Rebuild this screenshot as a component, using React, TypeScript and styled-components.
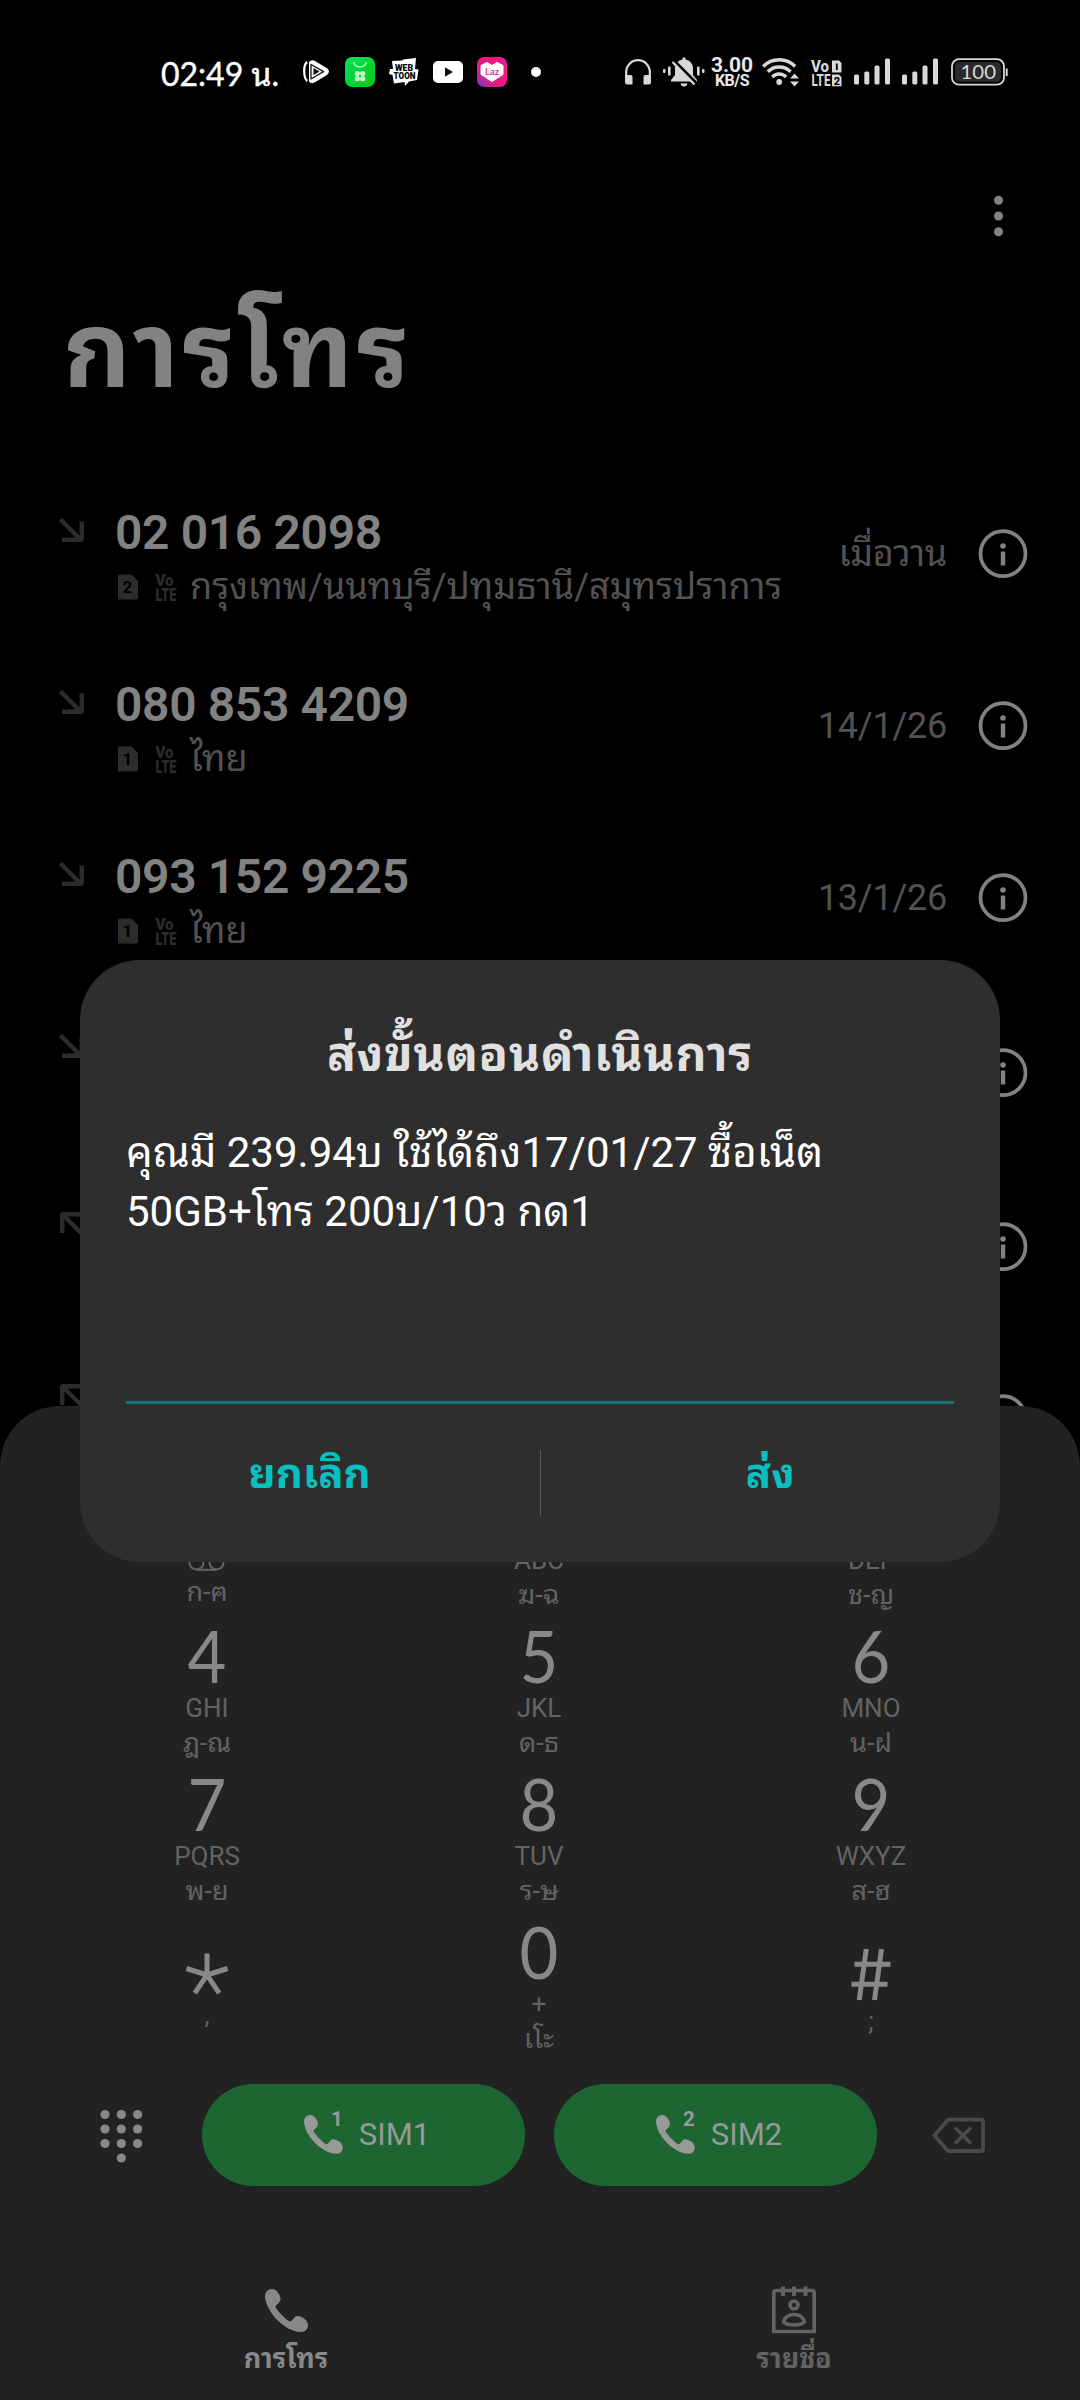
import React from "react";
import styled, { createGlobalStyle } from "styled-components";

const sans = `Roboto, "Noto Sans Thai Looped", "Noto Sans Thai", "Noto Sans", sans-serif`;

const GlobalStyle = createGlobalStyle`
  html, body { margin: 0; padding: 0; background: #000; }
  *, *::before, *::after { box-sizing: border-box; }
  svg { display: block; flex: none; overflow: visible; }
`;

const Screen = styled.div`
  position: relative;
  width: 1080px;
  height: 2400px;
  overflow: hidden;
  background: #000;
  color: #828282;
  font-family: ${sans};
  display: flex;
  flex-direction: column;
`;

/* ---------- status bar ---------- */

const StatusBar = styled.header`
  height: 144px;
  flex: none;
  display: flex;
  justify-content: space-between;
  align-items: center;
  padding: 0 72px 0 161px;
`;

const StatusGroup = styled.div`
  display: flex;
  align-items: center;
`;

const Slot = styled.div<{ $ml?: number }>`
  margin-left: ${(p) => p.$ml ?? 0}px;
`;

const Clock = styled.span`
  width: 142px;
  color: #fff;
  font: 400 32px/40px Lato, "Noto Sans Thai Looped", "Noto Sans Thai", sans-serif;
  -webkit-text-stroke: 0.4px #fff;
  white-space: nowrap;
  margin-top: 3px;
`;

const Speed = styled.div`
  width: 44px;
  margin-left: 5px;
  color: #e8e8e8;
  display: flex;
  flex-direction: column;
  align-items: center;
  font-weight: 700;
`;

const SpeedValue = styled.span`
  font-size: 21px;
  line-height: 17px;
`;

const SpeedUnit = styled.span`
  font-size: 16px;
  line-height: 14px;
  letter-spacing: -0.5px;
`;

/* ---------- page ---------- */

const Toolbar = styled.div`
  flex: none;
  height: 144px;
  display: flex;
  align-items: center;
  justify-content: flex-end;
  padding: 0 76px 0 0;
`;

const Title = styled.h1`
  margin: 0;
  flex: none;
  height: 180px;
  padding: 0 0 0 63px;
  font-size: 105px;
  line-height: 128px;
  letter-spacing: 3.6px;
  font-weight: 700;
  color: #828282;
`;

const List = styled.ul`
  list-style: none;
  margin: 0;
  padding: 0;
`;

const Row = styled.li<{ $tall?: boolean }>`
  height: ${(p) => (p.$tall ? 177 : 172)}px;
  display: flex;
  align-items: center;
  padding: 0 52px 0 58px;
`;

const Direction = styled.div`
  width: 57px;
  align-self: flex-start;
  padding-top: 49px;
`;

const Entry = styled.div`
  flex: 1;
  align-self: flex-start;
  padding-top: 37px;
`;

const Phone = styled.div`
  font-size: 48px;
  line-height: 56px;
  font-weight: 600;
  letter-spacing: -0.35px;
  color: #828282;
  white-space: nowrap;
`;

const Detail = styled.div`
  display: flex;
  align-items: center;
  margin-top: 4px;
  padding-left: 2px;
  height: 44px;
`;

const Place = styled.span`
  margin-left: 13px;
  font-size: 36px;
  line-height: 44px;
  color: #525252;
  white-space: nowrap;
`;

const When = styled.span`
  font-size: 36px;
  line-height: 44px;
  letter-spacing: -0.25px;
  color: #525252;
  margin-right: 31px;
  white-space: nowrap;
`;

/* ---------- dial pad ---------- */

const Sheet = styled.section`
  position: absolute;
  left: 0;
  right: 0;
  bottom: 0;
  height: 994px;
  border-radius: 60px 60px 0 0;
  background: #222;
  display: flex;
  flex-direction: column;
`;

const Keys = styled.div`
  margin-top: 64px;
  padding: 0 41px;
  display: grid;
  grid-template-columns: repeat(3, 332px);
  grid-auto-rows: 148px;
`;

const Key = styled.div`
  display: flex;
  flex-direction: column;
  align-items: center;
`;

const Digit = styled.span`
  font: 400 72px/74px Lato, ${sans};
  color: #888;
  height: 72px;
  transform: scaleX(0.93);
`;

const Symbol = styled.span`
  height: 72px;
`;

const Letters = styled.span<{ $drop?: number; $h?: number }>`
  font-size: 26px;
  line-height: 36px;
  height: ${(p) => p.$h ?? 36}px;
  margin-top: ${(p) => p.$drop ?? 0}px;
  color: #636363;
`;

const ThaiLetters = styled.span`
  font-size: 27px;
  line-height: 34px;
  color: #636363;
`;

const CallBar = styled.div`
  margin-top: 22px;
  height: 102px;
  display: flex;
  align-items: center;
  padding: 0 93px 0 100px;
`;

const CallButton = styled.button`
  width: 323px;
  height: 102px;
  border: 0;
  padding: 0 0 0 7px;
  border-radius: 51px;
  background: #1e6631;
  color: #999;
  font: 400 31px/36px ${sans};
  display: flex;
  align-items: center;
  justify-content: center;
  gap: 15px;
`;

const CallPair = styled.div`
  display: flex;
  gap: 29px;
  margin: 0 55px 0 59px;
`;

const Tabs = styled.nav`
  margin-top: 99px;
  display: grid;
  grid-template-columns: 508px 508px;
  padding-left: 32px;
`;

const Tab = styled.div<{ $active?: boolean }>`
  display: flex;
  flex-direction: column;
  align-items: center;
  color: ${(p) => (p.$active ? "#888" : "#636363")};
  font-size: 27px;
  line-height: 48px;
  font-weight: 700;
`;

const TabIcon = styled.div`
  height: 50px;
  display: flex;
  align-items: center;
`;

/* ---------- dialog ---------- */

const Dialog = styled.section`
  position: absolute;
  left: 80px;
  top: 960px;
  width: 920px;
  height: 602px;
  border-radius: 60px;
  background: #2e2e2e;
  padding: 0 46px;
  display: flex;
  flex-direction: column;
`;

const DialogTitle = styled.h2`
  margin: 65px 0 0;
  text-align: center;
  font-size: 48px;
  line-height: 60px;
  letter-spacing: 0.7px;
  font-weight: 700;
  color: #e0e0e0;
`;

const Message = styled.p`
  margin: 38px 0 0;
  height: 215px;
  font-size: 42px;
  line-height: 59px;
  color: #fff;
  white-space: pre;
`;

const Field = styled.div`
  height: 66px;
  border-bottom: 3px solid #0f7676;
`;

const Actions = styled.div`
  margin: 46px -46px 0;
  display: flex;
  align-items: flex-start;
  height: 66px;
`;

const Action = styled.button`
  flex: 1;
  border: 0;
  background: none;
  padding: 0;
  color: #0abfbf;
  font: 700 42px/47px ${sans};
`;

const Divider = styled.i`
  width: 1px;
  height: 66px;
  background: #5a5a5a;
`;

/* ---------- icons ---------- */

const PlayTriangle = () => (
  <svg width="27" height="26" viewBox="0 0 27 26">
    <path d="M6 3Q8 .3 11.500 1.700L24 9.200Q28 12.500 24 16L11.500 23.500Q8 25 6 22.500Z" fill="#fff" />
    <path d="M4.300 3Q1 5 1.200 12.500T4.300 22" fill="none" stroke="#fff" strokeWidth="2.200" />
    <path d="M8 5.500L20.500 12.600L8 20Z" fill="none" stroke="#111" strokeWidth="1.300" strokeLinejoin="round" />
    <path d="M10.500 9L16.500 12.600L10.500 16.200Z" fill="#111" />
  </svg>
);

const GreenApp = () => (
  <svg width="30" height="30" viewBox="0 0 30 30">
    <defs>
      <linearGradient id="green" x1="0" y1="0" x2="1" y2="1">
        <stop offset="0" stopColor="#07e060" />
        <stop offset="1" stopColor="#06c80e" />
      </linearGradient>
    </defs>
    <rect width="30" height="30" rx="7" fill="url(#green)" />
    <path d="M8.500 5Q10 10 15 10T21.500 5" fill="none" stroke="#c8ffd0" strokeWidth="1.200" />
    <g fill="#c3f7c8">
      <circle cx="12.300" cy="16.500" r="2.600" />
      <circle cx="17.700" cy="16.500" r="2.600" />
      <circle cx="12.300" cy="21.700" r="2.600" />
      <circle cx="17.700" cy="21.700" r="2.600" />
    </g>
  </svg>
);

const Webtoon = () => (
  <svg width="30" height="30" viewBox="0 0 30 30">
    <path d="M3 4L13 3.500L14 2.500L27 1L26 12L29.500 12.500L28 23L20 24.500L16 29L15.500 25L5 26.500L3.500 18L0 17L1 12L4 12Z" fill="#fff" />
    <g fill="#000" fontFamily="Roboto, sans-serif" fontWeight="900">
      <text x="6" y="14" fontSize="9" textLength="18" lengthAdjust="spacingAndGlyphs">WEB</text>
      <text x="4.500" y="21.500" fontSize="9" textLength="22" lengthAdjust="spacingAndGlyphs">TOON</text>
    </g>
  </svg>
);

const VideoApp = () => (
  <svg width="30" height="22" viewBox="0 0 30 22">
    <rect width="30" height="22" rx="5" fill="#fff" />
    <path d="M12 6.300L20 11L12 15.700Z" fill="#111" />
  </svg>
);

const HeartApp = () => (
  <svg width="30" height="30" viewBox="0 0 30 30">
    <defs>
      <linearGradient id="pink" x1="1" y1="0" x2="0" y2="1">
        <stop offset="0" stopColor="#c02bb8" />
        <stop offset=".25" stopColor="#f5147e" />
        <stop offset=".7" stopColor="#e01c8c" />
        <stop offset="1" stopColor="#5a3fd8" />
      </linearGradient>
    </defs>
    <rect width="30" height="30" rx="7" fill="url(#pink)" />
    <path d="M4 8.500L10 5.500L15 8.500L20 5.500L26 8.500V17.500L15 24.500L4 17.500Z" fill="#fff" stroke="#fff" strokeLinejoin="round" strokeWidth="1" />
    <text x="8" y="18" fontFamily="Lato, sans-serif" fontWeight="700" fontSize="9.500" fill="#e8308c" textLength="14" lengthAdjust="spacingAndGlyphs">Laz</text>
  </svg>
);

const Dot = () => (
  <svg width="10" height="10"><circle cx="5" cy="5" r="5" fill="#fff" /></svg>
);

const Headphones = () => (
  <svg width="28" height="28" viewBox="0 0 28 28">
    <path d="M2.200 20V14A11.800 11.800 0 0 1 25.800 14V20" fill="none" stroke="#d8d8d8" strokeWidth="2.200" />
    <path d="M1 17H6.500Q8.500 17 8.500 19V26.500H3.500Q1 26.500 1 24ZM27 17H21.500Q19.500 17 19.500 19V26.500H24.500Q27 26.500 27 24Z" fill="#d8d8d8" />
  </svg>
);

const BellOff = () => (
  <svg width="42" height="30" viewBox="0 0 42 30">
    <g fill="#d8d8d8">
      <rect x="0" y="12" width="2.500" height="4" rx="1" />
      <rect x="5" y="9.500" width="2.600" height="9" rx="1" />
      <rect x="34" y="9.500" width="2.600" height="9" rx="1" />
      <rect x="39" y="12" width="2.500" height="4" rx="1" />
      <path d="M19.500.5H22.500V2.500Q29.500 4 30 11V18L34 23V24.500H8V23L12 18V11Q12.500 4 19.500 2.500Z" />
      <path d="M17.500 26.500H24.500Q24 29.500 21 29.500T17.500 26.500Z" />
    </g>
    <path d="M11.500 4.500L32.500 25.500" stroke="#000" strokeWidth="3.400" />
    <path d="M9.500 5L31.500 27.500" stroke="#d8d8d8" strokeWidth="2.400" />
  </svg>
);

const Wifi = () => (
  <svg width="38" height="30" viewBox="0 0 38 30">
    <g fill="none" stroke="#d8d8d8" strokeWidth="3.400">
      <path d="M1.200 9.500A22.500 22.500 0 0 1 33.200 9.500" />
      <path d="M5.800 14.800A16 16 0 0 1 28.600 14.800" />
      <path d="M10.300 20A9.500 9.500 0 0 1 24.100 20" />
    </g>
    <circle cx="17.200" cy="25" r="2.900" fill="#d8d8d8" />
    <path d="M28 21.500L32.500 16.500L37 21.500ZM28 24.500L32.500 29.500L37 24.500Z" fill="#d8d8d8" />
  </svg>
);

const VoLteDual = () => (
  <svg width="31" height="27" viewBox="0 0 31 27">
    <g fontFamily="Roboto, sans-serif" fontWeight="800" fill="#d8d8d8">
      <text x="0" y="13" fontSize="16" textLength="18" lengthAdjust="spacingAndGlyphs">Vo</text>
      <text x="0.500" y="27" fontSize="16.500" textLength="19" lengthAdjust="spacingAndGlyphs">LTE</text>
      <path d="M21 1.500H28L30.500 4V13.500H21ZM21 15.500H28L30.500 18V27.200H21Z" />
      <path d="M25.800 4.500V11" stroke="#000" strokeWidth="1.800" />
      <text x="22.700" y="25.500" fontSize="11" fill="#000">2</text>
    </g>
  </svg>
);

const Signal = () => (
  <svg width="36" height="28" viewBox="0 0 36 28" fill="#d8d8d8">
    <rect x="0" y="16.500" width="5" height="10" rx="1.500" />
    <rect x="10.300" y="13.500" width="5" height="13" rx="1.500" />
    <rect x="20.500" y="7.500" width="5" height="19" rx="1.500" />
    <rect x="31" y=".5" width="5" height="26" rx="1.500" />
  </svg>
);

const Battery = () => (
  <svg width="57" height="28" viewBox="0 0 57 28">
    <rect x="1" y="1.200" width="52" height="25.500" rx="7" fill="none" stroke="#d8d8d8" strokeWidth="1.800" />
    <rect x="4" y="4.200" width="46" height="19.500" rx="4.500" fill="#2b2b2b" />
    <path d="M55.700 10.500V18" stroke="#d8d8d8" strokeWidth="2" />
    <text x="9.500" y="20.600" fontFamily="Lato, sans-serif" fontSize="19" fill="#d8d8d8" textLength="35.500" lengthAdjust="spacingAndGlyphs">100</text>
  </svg>
);

const More = () => (
  <svg width="11" height="42" viewBox="0 0 11 42" fill="#828282">
    <circle cx="5.500" cy="5.300" r="4.500" />
    <circle cx="5.500" cy="21" r="4.500" />
    <circle cx="5.500" cy="36.700" r="4.500" />
  </svg>
);

const ArrowIcon = ({ out }: { out?: boolean }) => (
  <svg width="28" height="28" viewBox="0 0 28 28" fill="none" stroke="#2c2c2c" strokeWidth="4.500">
    {out ? (
      <path d="M25 25L5.500 5.500M4.200 23V5.500Q4.200 4.200 5.500 4.200H24" />
    ) : (
      <path d="M2.500 2.500L22 22M4 22.800H22.500Q23.800 22.800 23.800 21.500V4.500" />
    )}
  </svg>
);

const SimIcon = ({ n }: { n: number }) => (
  <svg width="22" height="26" viewBox="0 0 22 26">
    <path d="M2 0.500H14.500L21 7V23.500Q21 25.500 19 25.500H1V1.500Q1 .5 2 .5Z" fill="#2c2c2c" />
    <text x="10.300" y="19.200" textAnchor="middle" fontFamily="Roboto, sans-serif" fontWeight="700" fontSize="17" fill="#000">{n}</text>
  </svg>
);

const VoLteSvg = styled.svg`
  margin-left: 16px;
`;

const VoLte = () => (
  <VoLteSvg width="22" height="28" viewBox="0 0 22 28" fill="#2c2c2c" fontFamily="Roboto, sans-serif" fontWeight="900">
    <text x="0.500" y="12.600" fontSize="16" textLength="18" lengthAdjust="spacingAndGlyphs">Vo</text>
    <text x="0.500" y="28" fontSize="18" textLength="21" lengthAdjust="spacingAndGlyphs">LTE</text>
  </VoLteSvg>
);

const Info = () => (
  <svg width="50" height="50" viewBox="0 0 50 50">
    <circle cx="25" cy="24.700" r="22.500" fill="none" stroke="#828282" strokeWidth="3.700" />
    <circle cx="25" cy="17" r="2.800" fill="#828282" />
    <rect x="22.800" y="22.500" width="4.400" height="14" fill="#828282" />
  </svg>
);

const Voicemail = () => (
  <svg width="38" height="30" viewBox="0 0 38 30" fill="none" stroke="#636363" strokeWidth="2">
    <circle cx="8.500" cy="20.500" r="7" />
    <circle cx="28.500" cy="20.500" r="7" />
    <path d="M8.500 27.800H28.500" />
  </svg>
);

const StarKey = () => (
  <svg width="44" height="90" viewBox="0 0 44 90" stroke="#888" strokeWidth="5">
    <path d="M22 39.500V61M22 61L1.500 54.500M22 61L42.500 54.500M22 61L9.800 79.200M22 61L34.200 79.200" fill="none" />
  </svg>
);

const HashKey = () => (
  <svg width="40" height="90" viewBox="0 0 40 90" stroke="#888" strokeWidth="5">
    <path d="M15.300 35L8.200 86M30.500 35L23.500 86M3.500 50.300H39.500M0.500 70.300H36.500" fill="none" />
  </svg>
);

const handset =
  "M7 0C3 0 0 3 0 7.500C1 23 20 43 36 43C40.500 43 43 40 43 36C43 31 36.500 27 32.500 27C29 27 27.500 32.500 25 32.500C21 31 12.500 22 10.500 18C11 15 15.500 14 15.500 10C15.500 6 11.500 0 7 0Z";

const Handset = () => (
  <svg width="43" height="43" viewBox="0 0 43 43"><path d={handset} fill="currentColor" /></svg>
);

const SimCall = ({ n }: { n: number }) => (
  <svg width="40" height="48" viewBox="0 0 40 48" fill="#999">
    <path d={handset} transform="translate(0 4) scale(.9)" />
    <text x="33" y="15" textAnchor="middle" fontFamily="Roboto, sans-serif" fontWeight="700" fontSize="20.500">{n}</text>
  </svg>
);

const PadIcon = () => (
  <svg width="43" height="56" viewBox="0 0 43 56" fill="#888">
    {[7.500, 22, 36.500].map((y) => [5, 21.300, 37.600].map((x) => <circle key={x + "-" + y} cx={x} cy={y} r="4.600" />))}
    <circle cx="21.300" cy="51" r="4.600" />
  </svg>
);

const Backspace = () => (
  <svg width="54" height="36" viewBox="0 0 54 36" fill="none" stroke="#4a4a4a" strokeWidth="3.800">
    <path d="M17 2.700H49Q51 2.700 51 4.700V32Q51 34 49 34H17Q16 34 15.300 33.200L2.500 18.400L15.300 3.500Q16 2.700 17 2.700Z" />
    <path d="M23 10.500L39 26.500M39 10.500L23 26.500" />
  </svg>
);

const Contacts = () => (
  <svg width="46" height="48" viewBox="0 0 46 48" fill="none" stroke="currentColor" strokeWidth="3.600">
    <path d="M2.800 45.500V7Q2.800 4.500 5.300 4.500H40.700Q43.200 4.500 43.200 7V45.500Z" />
    <path d="M12 0.500V10M23 0.500V10M34.500 0.500V10" strokeWidth="4" />
    <circle cx="23" cy="19" r="4" />
    <path d="M12.500 36C14 30.500 18.500 28.500 23 28.500S32 30.500 33.500 36C31 38.500 27 39 23 39S15 38.500 12.500 36Z" />
  </svg>
);

/* ---------- data ---------- */

const calls = [
  { phone: "02 016 2098", sim: 2, place: "กรุงเทพ/นนทบุรี/ปทุมธานี/สมุทรปราการ", when: "เมื่อวาน" },
  { phone: "080 853 4209", sim: 1, place: "ไทย", when: "14/1/26" },
  { phone: "093 152 9225", sim: 1, place: "ไทย", when: "13/1/26" },
];

const hiddenCalls: { tall?: boolean; out?: boolean }[] = [{ tall: true }, { out: true }, { out: true }];

type KeyDef = {
  digit?: string;
  symbol?: React.ReactNode;
  letters: React.ReactNode;
  thai?: string;
  drop?: number;
  h?: number;
};

const keys: KeyDef[] = [
  { digit: "1", letters: <Voicemail />, thai: "ก-ฅ", h: 33 },
  { digit: "2", letters: "ABC", thai: "ฆ-ฉ" },
  { digit: "3", letters: "DEF", thai: "ช-ญ" },
  { digit: "4", letters: "GHI", thai: "ฎ-ณ" },
  { digit: "5", letters: "JKL", thai: "ด-ธ" },
  { digit: "6", letters: "MNO", thai: "น-ฝ" },
  { digit: "7", letters: "PQRS", thai: "พ-ย" },
  { digit: "8", letters: "TUV", thai: "ร-ษ" },
  { digit: "9", letters: "WXYZ", thai: "ส-ฮ" },
  { symbol: <StarKey />, letters: ",", drop: 11 },
  { digit: "0", letters: "+", thai: "เโะ" },
  { symbol: <HashKey />, letters: ";", drop: 17 },
];

export default function App() {
  return (
    <Screen>
      <GlobalStyle />
      <StatusBar>
        <StatusGroup>
          <Clock>02:49 น.</Clock>
          <PlayTriangle />
          <Slot $ml={15}><GreenApp /></Slot>
          <Slot $ml={14}><Webtoon /></Slot>
          <Slot $ml={14}><VideoApp /></Slot>
          <Slot $ml={14}><HeartApp /></Slot>
          <Slot $ml={24}><Dot /></Slot>
        </StatusGroup>
        <StatusGroup>
          <Headphones />
          <Slot $ml={11}><BellOff /></Slot>
          <Speed>
            <SpeedValue>3.00</SpeedValue>
            <SpeedUnit>KB/S</SpeedUnit>
          </Speed>
          <Slot $ml={8}><Wifi /></Slot>
          <Slot $ml={11}><VoLteDual /></Slot>
          <Slot $ml={12}><Signal /></Slot>
          <Slot $ml={12}><Signal /></Slot>
          <Slot $ml={13}><Battery /></Slot>
        </StatusGroup>
      </StatusBar>
      <Toolbar><More /></Toolbar>
      <Title>การโทร</Title>
      <List>
        {calls.map((c) => (
          <Row key={c.phone}>
            <Direction><ArrowIcon /></Direction>
            <Entry>
              <Phone>{c.phone}</Phone>
              <Detail>
                <SimIcon n={c.sim} />
                <VoLte />
                <Place>{c.place}</Place>
              </Detail>
            </Entry>
            <When>{c.when}</When>
            <Info />
          </Row>
        ))}
        {hiddenCalls.map((c, i) => (
          <Row key={i} $tall={c.tall}>
            <Direction><ArrowIcon out={c.out} /></Direction>
            <Entry />
            <Info />
          </Row>
        ))}
      </List>

      <Sheet>
        <Keys>
          {keys.map((k, i) => (
            <Key key={i}>
              {k.digit ? <Digit>{k.digit}</Digit> : <Symbol>{k.symbol}</Symbol>}
              <Letters $drop={k.drop} $h={k.h}>{k.letters}</Letters>
              {k.thai && <ThaiLetters>{k.thai}</ThaiLetters>}
            </Key>
          ))}
        </Keys>
        <CallBar>
          <PadIcon />
          <CallPair>
            <CallButton><SimCall n={1} />SIM1</CallButton>
            <CallButton><SimCall n={2} />SIM2</CallButton>
          </CallPair>
          <Backspace />
        </CallBar>
        <Tabs>
          <Tab $active><TabIcon><Handset /></TabIcon>การโทร</Tab>
          <Tab><TabIcon><Contacts /></TabIcon>รายชื่อ</Tab>
        </Tabs>
      </Sheet>

      <Dialog>
        <DialogTitle>ส่งขั้นตอนดำเนินการ</DialogTitle>
        <Message>{"คุณมี 239.94บ ใช้ได้ถึง17/01/27 ซื้อเน็ต\n50GB+โทร 200บ/10ว กด1"}</Message>
        <Field />
        <Actions>
          <Action>ยกเลิก</Action>
          <Divider />
          <Action>ส่ง</Action>
        </Actions>
      </Dialog>
    </Screen>
  );
}
